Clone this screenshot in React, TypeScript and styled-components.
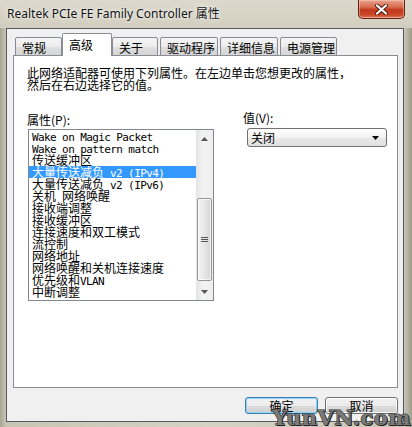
import React, { FC } from 'react';
import styled, { createGlobalStyle } from 'styled-components';

const GlobalStyle = createGlobalStyle`
  html, body {
    margin: 0;
    padding: 0;
    background: #c9c5b5;
  }
`;

const cjk = `"Noto Sans CJK SC", "Noto Sans", sans-serif`;

const Window = styled.div`
  position: relative;
  width: 412px;
  height: 427px;
  display: flex;
  flex-direction: column;
  overflow: hidden;
  background: linear-gradient(to right, #a7a693 0px, #c8c5b4 6px, #d6d2c4 50%, #c9c6b6 calc(100% - 8px), #9e9d8c 100%);
  font-family: ${cjk};
`;

const TitleBar = styled.div`
  height: 28px;
  display: flex;
  align-items: flex-start;
  background: linear-gradient(to bottom, #dcd8cb, #d2cebf);
`;

const Title = styled.div`
  margin: 6px 0 0 7px;
  font-family: "Noto Sans", "Noto Sans CJK SC", sans-serif;
  font-size: 12px;
  line-height: 16px;
  color: #111;
  text-shadow: 0 0 6px rgba(255, 255, 255, 0.9), 0 0 2px rgba(255, 255, 255, 0.9);
  white-space: nowrap;
`;

const CloseButton = styled.div`
  margin-left: auto;
  margin-right: 7px;
  width: 45px;
  height: 18px;
  display: flex;
  align-items: center;
  justify-content: center;
  border: 1px solid #5e2519;
  border-top: none;
  border-radius: 0 0 5px 5px;
  background: linear-gradient(to bottom, #e9a38f 0%, #d86a4d 40%, #c0381c 55%, #cc4a2a 85%, #e0806a 100%);
  box-shadow: inset 0 0 0 1px rgba(255, 220, 200, 0.45);
`;

const Client = styled.div`
  flex: 1;
  margin: 0 8px 5px 6px;
  border: 1px solid #555a5e;
  background: #f0f0f0;
  display: flex;
  flex-direction: column;
  padding: 4px 5px 7px 6px;
`;

const TabRow = styled.div`
  display: flex;
  align-items: flex-end;
  gap: 2px;
  height: 23px;
  padding-left: 2px;
  margin-bottom: -1px;
  position: relative;
  z-index: 1;
`;

const Tab = styled.div<{ $w: number; $active?: boolean }>`
  box-sizing: border-box;
  width: ${(p) => p.$w}px;
  height: ${(p) => (p.$active ? 23 : 19)}px;
  margin: 0 ${(p) => (p.$active ? -2 : 0)}px;
  padding: ${(p) => (p.$active ? 4 : 3)}px 0 0 6px;
  border: 1px solid #898c95;
  border-bottom: ${(p) => (p.$active ? 'none' : '1px solid #898c95')};
  border-radius: 2px 2px 0 0;
  background: ${(p) =>
    p.$active ? '#fff' : 'linear-gradient(to bottom, #f4f4f4 0%, #ececec 50%, #dfdfdf 51%, #d5d5d5 100%)'};
  font-size: 12px;
  line-height: 14px;
  color: #000;
  white-space: nowrap;
  position: relative;
  z-index: ${(p) => (p.$active ? 2 : 1)};
`;

const Panel = styled.div`
  height: 333px;
  box-sizing: border-box;
  border: 1px solid #898c95;
  background: #fff;
  padding: 11px 13px;
`;

const Description = styled.div`
  width: 330px;
  font-size: 12px;
  line-height: 12px;
  color: #000;
`;

const Columns = styled.div`
  display: flex;
  margin-top: 23px;
`;

const LeftColumn = styled.div`
  width: 187px;
  display: flex;
  flex-direction: column;
`;

const RightColumn = styled.div`
  margin-left: 29px;
  margin-top: -2px;
  display: flex;
  flex-direction: column;
`;

const Label = styled.div`
  font-size: 12px;
  line-height: 12px;
  color: #000;
`;

const ListBox = styled.div`
  margin: 3px 0 0 1px;
  width: 186px;
  height: 172px;
  box-sizing: border-box;
  border: 1px solid #828790;
  display: flex;
`;

const Items = styled.div`
  flex: 1;
  overflow: hidden;
`;

const Item = styled.div<{ $selected?: boolean }>`
  height: 12px;
  font-size: 12px;
  line-height: 12px;
  padding-left: 3px;
  white-space: nowrap;
  color: ${(p) => (p.$selected ? '#fff' : '#000')};
  background: ${(p) => (p.$selected ? '#3399ff' : 'transparent')};
`;

const Latin = styled.span`
  font-family: "DejaVu Sans Mono", "Liberation Mono", monospace;
  font-size: 11px;
  letter-spacing: -0.6px;
`;

const ScrollBar = styled.div`
  width: 17px;
  display: flex;
  flex-direction: column;
  background: linear-gradient(to right, #e3e3e3, #f3f3f3 40%, #eeeeee);
`;

const ScrollArrow = styled.div`
  height: 17px;
  display: flex;
  align-items: center;
  justify-content: center;
`;

const Track = styled.div`
  flex: 1;
  display: flex;
  flex-direction: column;
`;

const Thumb = styled.div<{ $top: number; $h: number }>`
  margin: ${(p) => p.$top}px 1px 0 1px;
  height: ${(p) => p.$h}px;
  box-sizing: border-box;
  border: 1px solid #979797;
  border-radius: 2px;
  background: linear-gradient(to right, #f4f4f4, #e6e6e6 50%, #d6d6d6);
  box-shadow: inset 0 0 0 1px rgba(255, 255, 255, 0.7);
  display: flex;
  align-items: center;
  justify-content: center;
`;

const Combo = styled.div`
  margin: 4px 0 0 4px;
  width: 140px;
  height: 19px;
  box-sizing: border-box;
  border: 1px solid #707070;
  border-radius: 3px;
  background: linear-gradient(to bottom, #fcfcfc 0%, #f2f2f2 50%, #e8e8e8 51%, #e0e0e0 100%);
  display: flex;
  align-items: center;
  padding: 0 7px 0 3px;
  font-size: 12px;
  line-height: 12px;
  color: #000;
`;

const ComboText = styled.div`
  flex: 1;
`;

const ButtonRow = styled.div`
  display: flex;
  justify-content: flex-end;
  gap: 7px;
  margin-top: 9px;
`;

const Button = styled.div<{ $default?: boolean }>`
  width: 73px;
  height: 17px;
  box-sizing: border-box;
  border: 1px solid ${(p) => (p.$default ? '#3c7fb1' : '#707070')};
  border-radius: 3px;
  background: linear-gradient(to bottom, #f2f2f2 0%, #ebebeb 50%, #dddddd 51%, #cfcfcf 100%);
  box-shadow: inset 0 0 0 1px ${(p) => (p.$default ? '#8fd3fa' : 'rgba(255,255,255,0.8)')};
  font-size: 12px;
  line-height: 15px;
  text-align: center;
  color: #000;
`;

const Watermark = styled.div`
  position: absolute;
  right: 1px;
  bottom: -3px;
  font-family: "DejaVu Serif", "Liberation Serif", serif;
  font-weight: bold;
  font-size: 21px;
  letter-spacing: 0.5px;
  color: #7a7a7a;
  -webkit-text-stroke: 1.2px #2e2e2e;
  paint-order: stroke fill;
  text-shadow: 1px 1px 0 #222;
`;

const Triangle: FC<{ down?: boolean; color?: string }> = ({ down, color = '#555' }) => (
  <svg width="7" height="4" viewBox="0 0 7 4">
    <path d={down ? 'M0 0 H7 L3.5 4 Z' : 'M0 4 H7 L3.5 0 Z'} fill={color} />
  </svg>
);

const CloseGlyph: FC = () => (
  <svg width="13" height="11" viewBox="0 0 13 11">
    <path d="M2 1.5 L11 9.5 M11 1.5 L2 9.5" stroke="#4a1a10" strokeWidth="4" strokeLinecap="round" />
    <path d="M2 1.5 L11 9.5 M11 1.5 L2 9.5" stroke="#fff" strokeWidth="2.2" strokeLinecap="round" />
  </svg>
);

const Gripper: FC = () => (
  <svg width="7" height="6" viewBox="0 0 7 6">
    <path d="M0 0.5 H7 M0 2.5 H7 M0 4.5 H7" stroke="#555" strokeWidth="1" />
  </svg>
);

const tabs = [
  { label: '常规', w: 47 },
  { label: '高级', w: 50, active: true },
  { label: '关于', w: 46 },
  { label: '驱动程序', w: 58 },
  { label: '详细信息', w: 58 },
  { label: '电源管理', w: 57 },
];

const properties = [
  'Wake on Magic Packet',
  'Wake on pattern match',
  '传送缓冲区',
  '大量传送减负 v2 (IPv4)',
  '大量传送减负 v2 (IPv6)',
  '关机 网络唤醒',
  '接收端调整',
  '接收缓冲区',
  '连接速度和双工模式',
  '流控制',
  '网络地址',
  '网络唤醒和关机连接速度',
  '优先级和VLAN',
  '中断调整',
];

const mixed = (text: string) =>
  text.split(/([\x20-\x7e]+)/).map((part, i) =>
    /[\x20-\x7e]/.test(part) ? <Latin key={i}>{part}</Latin> : part
  );

const App: FC = () => {
  return (
    <>
      <GlobalStyle />
      <Window>
        <TitleBar>
          <Title>Realtek PCIe FE Family Controller 属性</Title>
          <CloseButton>
            <CloseGlyph />
          </CloseButton>
        </TitleBar>
        <Client>
          <TabRow>
            {tabs.map((t) => (
              <Tab key={t.label} $w={t.w} $active={t.active}>
                {t.label}
              </Tab>
            ))}
          </TabRow>
          <Panel>
            <Description>
              此网络适配器可使用下列属性。在左边单击您想更改的属性，然后在右边选择它的值。
            </Description>
            <Columns>
              <LeftColumn>
                <Label>属性(P):</Label>
                <ListBox>
                  <Items>
                    {properties.map((p, i) => (
                      <Item key={p} $selected={i === 3}>
                        {mixed(p)}
                      </Item>
                    ))}
                  </Items>
                  <ScrollBar>
                    <ScrollArrow>
                      <Triangle />
                    </ScrollArrow>
                    <Track>
                      <Thumb $top={51} $h={83}>
                        <Gripper />
                      </Thumb>
                    </Track>
                    <ScrollArrow>
                      <Triangle down />
                    </ScrollArrow>
                  </ScrollBar>
                </ListBox>
              </LeftColumn>
              <RightColumn>
                <Label>值(V):</Label>
                <Combo>
                  <ComboText>关闭</ComboText>
                  <Triangle down color="#000" />
                </Combo>
              </RightColumn>
            </Columns>
          </Panel>
          <ButtonRow>
            <Button $default>确定</Button>
            <Button>取消</Button>
          </ButtonRow>
        </Client>
        <Watermark>YunVN.com</Watermark>
      </Window>
    </>
  );
};

export default App;
